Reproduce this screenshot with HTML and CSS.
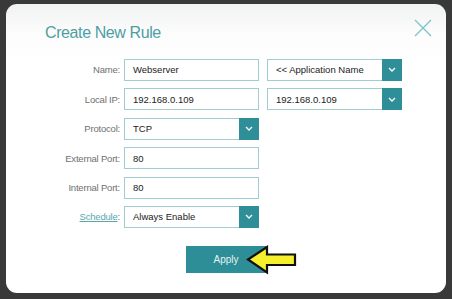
FILE: index.html
```html
<!DOCTYPE html>
<html>
<head>
<meta charset="utf-8">
<link rel="stylesheet" href="styles.css">
</head>
<body>
<div class="panel">
  <h1 class="title">Create New Rule</h1>
  <svg class="close" width="18" height="18" viewBox="0 0 18 18"><path d="M1 1L17 17M17 1L1 17" stroke="#7cc4c9" stroke-width="1.3" fill="none"/></svg>
  <div class="form">
    <label class="lbl">Name:</label>
    <div class="box">Webserver</div>
    <div class="box sel"><span class="val">&lt;&lt; Application Name</span><span class="dd"><svg width="8" height="5" viewBox="0 0 8 5"><path d="M1 1L4 4L7 1" stroke="#fff" stroke-width="1.3" fill="none"/></svg></span></div>

    <label class="lbl">Local IP:</label>
    <div class="box">192.168.0.109</div>
    <div class="box sel"><span class="val">192.168.0.109</span><span class="dd"><svg width="8" height="5" viewBox="0 0 8 5"><path d="M1 1L4 4L7 1" stroke="#fff" stroke-width="1.3" fill="none"/></svg></span></div>

    <label class="lbl">Protocol:</label>
    <div class="box sel"><span class="val">TCP</span><span class="dd"><svg width="8" height="5" viewBox="0 0 8 5"><path d="M1 1L4 4L7 1" stroke="#fff" stroke-width="1.3" fill="none"/></svg></span></div>
    <div></div>

    <label class="lbl">External Port:</label>
    <div class="box">80</div>
    <div></div>

    <label class="lbl">Internal Port:</label>
    <div class="box">80</div>
    <div></div>

    <label class="lbl"><a class="link">Schedule</a>:</label>
    <div class="box sel"><span class="val">Always Enable</span><span class="dd"><svg width="8" height="5" viewBox="0 0 8 5"><path d="M1 1L4 4L7 1" stroke="#fff" stroke-width="1.3" fill="none"/></svg></span></div>
    <div></div>
  </div>
  <div class="actions">
    <div class="btnwrap">
      <div class="apply">Apply</div>
      <svg class="arrow" width="52" height="30" viewBox="0 0 52 30"><path d="M2 14.5L21 2V9.5H49V20H21V27.5Z" fill="#f6f02c" stroke="#111" stroke-width="2.2" stroke-linejoin="miter"/></svg>
    </div>
  </div>
</div>
</body>
</html>
```
FILE: styles.css
```css
html, body {
  margin: 0;
  padding: 0;
}
body {
  width: 452px;
  height: 299px;
  background: #393939;
  overflow: hidden;
  font-family: "Liberation Sans", Arial, sans-serif;
  padding-top: 4px;
  box-sizing: border-box;
}
.panel {
  position: relative;
  margin: 0 6px 0 6px;
  height: 289px;
  border-radius: 11px;
  background: linear-gradient(#f1f2f2 0px, #fcfcfc 30px, #ffffff 60px);
  box-sizing: border-box;
  padding-top: 19.4px;
}
.title {
  margin: 0 0 0 39px;
  font-weight: normal;
  font-size: 16px;
  letter-spacing: -0.4px;
  line-height: 19px;
  color: #4e9ea4;
}
.close {
  position: absolute;
  top: 15px;
  right: 14px;
}
.form {
  margin-top: 16.6px;
  display: grid;
  grid-template-columns: 110px 135px 135px;
  column-gap: 8px;
  row-gap: 7.4px;
  grid-auto-rows: 22px;
}
.lbl {
  justify-self: end;
  align-self: center;
  margin-right: -4px;
  font-size: 9.5px;
  color: #707070;
  letter-spacing: -0.2px;
}
.link {
  color: #5aa7ae;
  text-decoration: underline;
}
.box {
  border: 1px solid #9fcdd0;
  box-sizing: border-box;
  height: 22px;
  display: flex;
  align-items: center;
  padding-left: 8px;
  font-size: 9.5px;
  color: #222;
  background: #fff;
}
.sel {
  padding-left: 0;
}
.val {
  flex: 1;
  padding-left: 8px;
}
.dd {
  width: 20px;
  height: 22px;
  margin-right: -1px;
  background: #2f8f99;
  display: flex;
  align-items: center;
  justify-content: center;
}
.actions {
  margin-top: 18px;
  display: flex;
  justify-content: center;
}
.btnwrap {
  position: relative;
}
.apply {
  width: 80px;
  height: 27px;
  background: #2e8e97;
  color: #e4f2f3;
  font-size: 10px;
  display: flex;
  align-items: center;
  justify-content: center;
}
.arrow {
  position: absolute;
  left: 60px;
  top: -1px;
}
```
